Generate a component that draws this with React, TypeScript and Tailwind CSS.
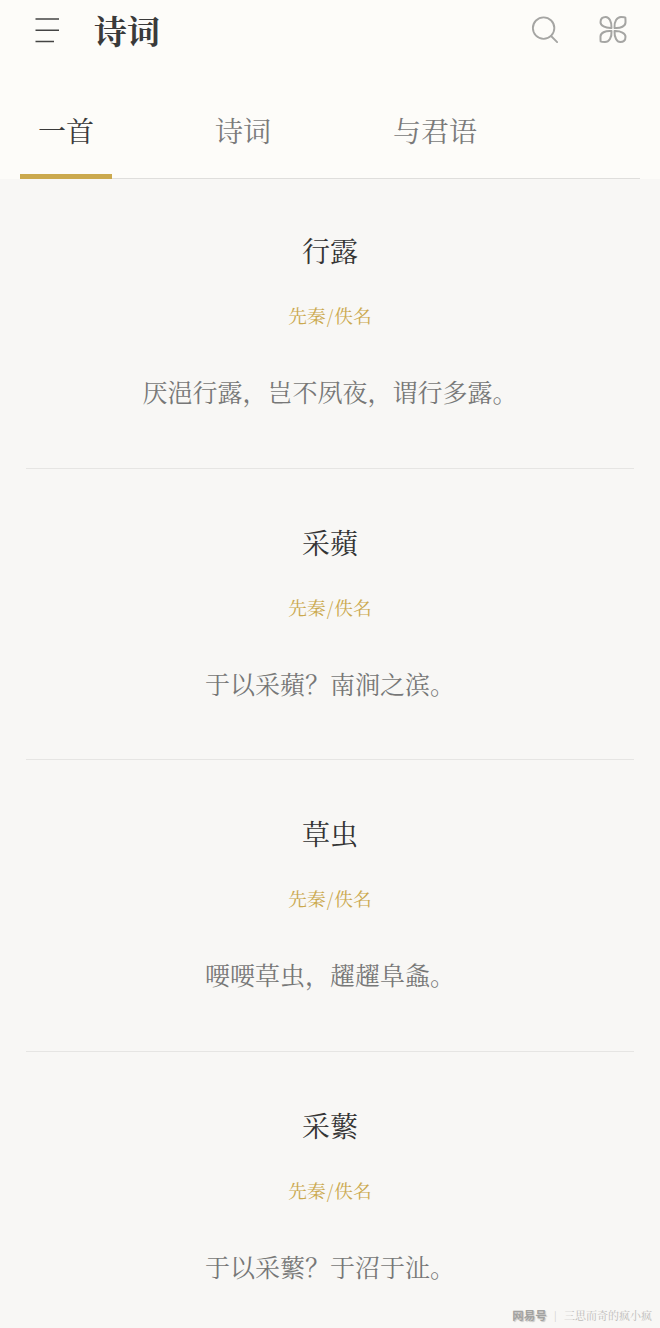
const poems = [
  { title: "行露", line: "厌浥行露，岂不夙夜，谓行多露。" },
  { title: "采蘋", line: "于以采蘋？南涧之滨。" },
  { title: "草虫", line: "喓喓草虫，趯趯阜螽。" },
  { title: "采蘩", line: "于以采蘩？于沼于沚。" },
];

const serif = "font-['Noto_Serif_CJK_SC','Liberation_Serif','Noto_Sans_CJK_SC',serif]";

function Poem({ title, line, last }: { title: string; line: string; last: boolean }) {
  return (
    <div className={`mx-[26px] h-[291.67px] flex flex-col items-center ${last ? "" : "border-b border-[#e6e5e3]"}`}>
      <div className="mt-[53px] h-[40px] leading-[40px] text-[28px] text-[#333333]">{title}</div>
      <div className="mt-[32px] h-[26px] leading-[26px] text-[18.7px] text-[#cba94e]">先秦<span className="mx-[1px]">/</span>佚名</div>
      <div className="mt-[43px] h-[40px] leading-[40px] text-[25px] text-[#777777]">{line}</div>
    </div>
  );
}

export default function App() {
  return (
    <div className={`relative w-[660px] h-[1328px] overflow-hidden bg-[#f8f7f5] ${serif}`}>
      <div className="bg-[#fdfcf9] h-[179px] flex flex-col">
        <div className="h-[62px] flex items-center">
          <svg className="ml-[35px] shrink-0" width="25" height="26" viewBox="0 0 25 26" stroke="#444444" strokeWidth="1.6" fill="none">
            <path d="M0.5 1H24M0.5 12.2H24M0.5 23.5H19" />
          </svg>
          <div className="ml-[34px] text-[33px] leading-[40px] font-bold text-[#3a3a3a] -translate-y-px">诗词</div>
          <svg className="ml-auto shrink-0 -translate-y-[1.5px]" width="28" height="28" viewBox="0 0 30 30" stroke="#a5a5a3" strokeWidth="2" fill="none" strokeLinecap="round">
            <circle cx="13.5" cy="13.5" r="11.5" />
            <path d="M21.5 22L28 28.5" />
          </svg>
          <svg className="ml-[40px] mr-[33px] shrink-0 -translate-y-[1.5px]" width="28" height="28" viewBox="0 0 28 28" stroke="#a5a5a3" strokeWidth="2" fill="none" strokeLinejoin="round">
            <path d="M12.5 12.5C6 12.8 1.5 10 1.5 6.8C1.5 3.6 3.6 1.5 6.8 1.5C10 1.5 12.8 6 12.5 12.5Z" />
            <path d="M15.5 12.5C15 6 18 1.5 22 1.5C24.5 1.5 26 1.8 26.3 2C26.6 4 26.5 5 26.5 7C26.5 10.5 22 13 15.5 12.5Z" />
            <path d="M12.5 15.5C13 22 10 26.5 6 26.5C3.5 26.5 2 26.2 1.7 26C1.4 24 1.5 23 1.5 21C1.5 17.5 6 15 12.5 15.5Z" />
            <path d="M15.5 15.5C22 15.2 26.5 18 26.5 21.2C26.5 24.4 24.4 26.5 21.2 26.5C18 26.5 15.2 22 15.5 15.5Z" />
          </svg>
        </div>
        <div className="mx-[20px] mt-auto h-[117px] flex border-b border-[#dfdedc]">
          <div className="relative w-[92px] pt-[48px] text-center text-[28px] leading-[40px] text-[#3a3a3a]">
            一首
            <div className="absolute left-0 right-0 bottom-[-1px] h-[5px] bg-[#cba94e]" />
          </div>
          <div className="ml-[103px] pt-[48px] text-[28px] leading-[40px] text-[#7a7a7a]">诗词</div>
          <div className="ml-[122px] pt-[48px] text-[28px] leading-[40px] text-[#7a7a7a]">与君语</div>
        </div>
      </div>
      <div className="-mt-[2px]">
        {poems.map((p, i) => (
          <Poem key={p.title} title={p.title} line={p.line} last={i === poems.length - 1} />
        ))}
      </div>
      <div className="absolute right-[8px] bottom-[5px] flex items-center text-[11px] leading-[16px] text-[#bdbcba]">
        <span className="font-['Noto_Sans_CJK_SC',sans-serif] font-bold text-[11.5px] text-[#a3a2a0] [text-shadow:1px_1px_1px_rgba(0,0,0,0.2)]">网易号</span>
        <span className="mx-[7px] text-[10px] text-[#c9c8c6]">|</span>
        <span>三思而奇的疯小疯</span>
      </div>
    </div>
  );
}
